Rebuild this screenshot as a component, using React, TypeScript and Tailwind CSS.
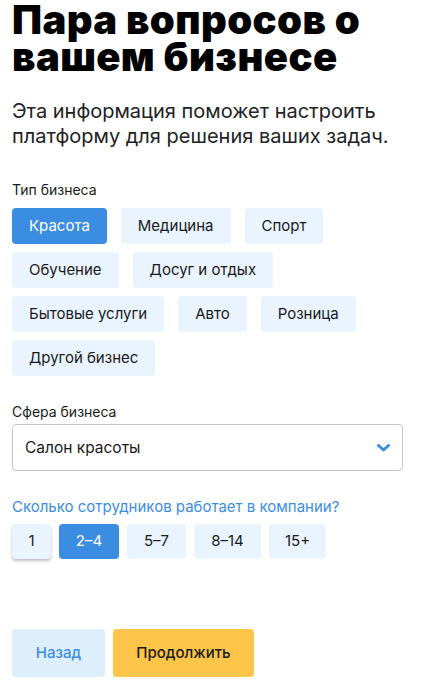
import { useState } from "react";

const businessTypes = [
  "Красота",
  "Медицина",
  "Спорт",
  "Обучение",
  "Досуг и отдых",
  "Бытовые услуги",
  "Авто",
  "Розница",
  "Другой бизнес",
];

const staffSizes = [
  { label: "1", w: "w-[39px]" },
  { label: "2–4", w: "w-[60px]" },
  { label: "5–7", w: "w-[59px]" },
  { label: "8–14", w: "w-[67px]" },
  { label: "15+", w: "w-[57px]" },
];

export default function App() {
  const [type, setType] = useState("Красота");
  const [staff, setStaff] = useState("2–4");

  return (
    <main className="min-h-screen bg-white pl-3 pr-[30px] pt-[1px] font-['Inter',sans-serif] text-[#1a1a1a]">
      <h1 className="text-[40px] font-black leading-[37px] tracking-[0.4px] text-black">
        Пара вопросов о вашем бизнесе
      </h1>
      <p className="mt-6 text-[20px] leading-[25px] text-[#222]">
        Эта информация поможет настроить платформу для решения ваших задач.
      </p>

      <div className="mt-[32px] text-[14px] leading-[18px]">Тип бизнеса</div>
      <div className="mt-[9px] flex flex-wrap gap-x-[14px] gap-y-2">
        {businessTypes.map((t) => (
          <button
            key={t}
            onClick={() => setType(t)}
            className={
              t === type
                ? "h-9 rounded bg-[#3b8de2] px-[17px] text-[15px] text-white"
                : "h-9 rounded bg-[#eaf4fe] px-[17px] text-[15px] text-[#1a1a1a]"
            }
          >
            {t}
          </button>
        ))}
      </div>

      <div className="mt-[27px] text-[14px] leading-[17px]">Сфера бизнеса</div>
      <div className="mt-1 flex h-[47px] items-center justify-between rounded border border-[#c4c4c4] pl-3 pr-3">
        <span className="text-[15.5px]">Салон красоты</span>
        <svg width="13" height="8" viewBox="0 0 13 8" fill="none">
          <path d="M1.5 1.5 6.5 6 11.5 1.5" stroke="#3b8de2" strokeWidth="3" strokeLinecap="round" strokeLinejoin="round" />
        </svg>
      </div>

      <div className="mt-[27px] text-[15px] leading-[18px] text-[#3b8de2]">
        Сколько сотрудников работает в компании?
      </div>
      <div className="mt-2 flex gap-2">
        {staffSizes.map((s) => (
          <button
            key={s.label}
            onClick={() => setStaff(s.label)}
            className={
              s.label === staff
                ? `${s.w} h-[35px] rounded bg-[#3b8de2] text-[15px] text-white`
                : s.label === "1"
                  ? `${s.w} h-[35px] rounded bg-[#eaf4fe] text-[15px] shadow-[0_2px_3px_rgba(0,0,0,0.25)]`
                  : `${s.w} h-[35px] rounded bg-[#eaf4fe] text-[15px]`
            }
          >
            {s.label}
          </button>
        ))}
      </div>

      <div className="mt-[70px] flex gap-2 pb-2">
        <button className="h-12 w-[93px] rounded bg-[#ddeefd] text-[15px] font-medium text-[#3b8de2]">
          Назад
        </button>
        <button className="h-12 w-[141px] rounded bg-[#fdc54a] text-[15px] font-medium text-[#1a1a1a]">
          Продолжить
        </button>
      </div>
    </main>
  );
}
